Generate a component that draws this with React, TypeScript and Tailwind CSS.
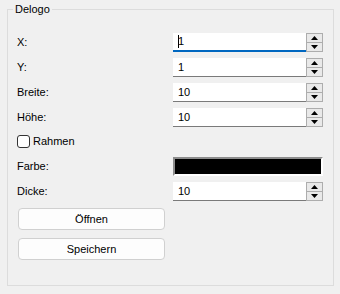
import type { ReactNode } from "react";

const font = { fontFamily: '"Liberation Sans", Arial, sans-serif' };

function Spinner() {
  return (
    <div className="flex h-[19px] w-[17px] flex-col border border-[#adadad] bg-[#e9e9e9]">
      <div className="flex flex-1 items-center justify-center border-b border-[#adadad]">
        <svg width="7" height="4" viewBox="0 0 7 4">
          <path d="M3.5 0L7 4H0z" fill="#000" />
        </svg>
      </div>
      <div className="flex flex-1 items-center justify-center">
        <svg width="7" height="4" viewBox="0 0 7 4">
          <path d="M0 0h7L3.5 4z" fill="#000" />
        </svg>
      </div>
    </div>
  );
}

function SpinBox({ value, focused }: { value: string; focused?: boolean }) {
  return (
    <div className="flex h-[19px] w-[150px]">
      <div
        className={`flex flex-1 items-center bg-white pl-[5px] text-[11px] text-black ${
          focused ? "border-b-2 border-[#0067c0]" : "border-b border-[#7a7a7a]"
        }`}
      >
        {focused && <span className="mr-[-1px] h-[13px] w-px bg-black" />}
        {value}
      </div>
      <Spinner />
    </div>
  );
}

function Row({ label, children }: { label: ReactNode; children: ReactNode }) {
  return (
    <div className="flex h-[19px] items-center">
      <span className="w-[156px] text-[11px] text-black">{label}</span>
      {children}
    </div>
  );
}

export default function App() {
  return (
    <div className="h-[294px] w-[340px] bg-[#f0f0f0] pt-[1px]" style={font}>
      <fieldset className="ml-[7px] h-[285px] w-[327px] border border-[#dcdcdc]">
        <legend className="ml-[5px] px-[2px] text-[11px] leading-[16px] text-black">Delogo</legend>
        <div className="flex flex-col pl-[9px] pt-[16px]">
          <div className="flex flex-col gap-[6px]">
            <Row label="X:">
              <SpinBox value="1" focused />
            </Row>
            <Row label="Y:">
              <SpinBox value="1" />
            </Row>
            <Row label="Breite:">
              <SpinBox value="10" />
            </Row>
            <Row label="Höhe:">
              <SpinBox value="10" />
            </Row>
          </div>
          <label className="mt-[5px] flex h-[19px] items-center gap-[3px] text-[11px] text-black">
            <span className="h-[13px] w-[13px] rounded-[3px] border border-[#333] bg-white" />
            Rahmen
          </label>
          <div className="mt-[6px] flex flex-col gap-[6px]">
            <Row label="Farbe:">
              <div className="h-[19px] w-[150px] border-2 border-[#8c8c8c] border-b-white border-r-white bg-black" />
            </Row>
            <Row label="Dicke:">
              <SpinBox value="10" />
            </Row>
          </div>
          <div className="ml-px mt-[7px] flex flex-col gap-[8px]">
            <button className="h-[22px] w-[147px] rounded-[4px] border border-[#d0d0d0] bg-[#fdfdfd] text-[11px] text-black">
              Öffnen
            </button>
            <button className="h-[22px] w-[147px] rounded-[4px] border border-[#d0d0d0] bg-[#fdfdfd] text-[11px] text-black">
              Speichern
            </button>
          </div>
        </div>
      </fieldset>
    </div>
  );
}
